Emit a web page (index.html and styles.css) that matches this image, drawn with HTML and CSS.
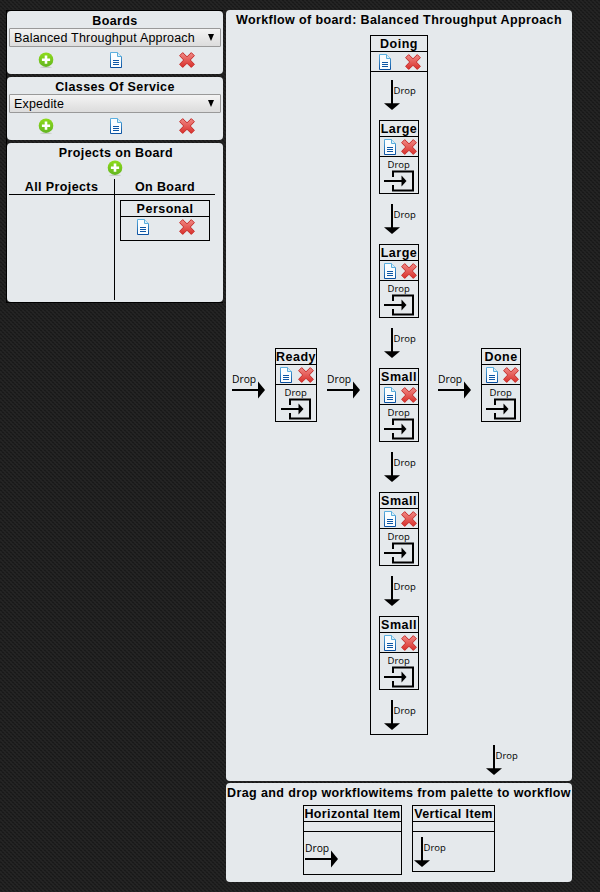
FILE: index.html
```
<!DOCTYPE html>
<html lang="en">
<head>
<meta charset="utf-8">
<title>Workflow</title>
<link rel="stylesheet" href="styles.css">
</head>
<body>
<svg class="defs" width="0" height="0">
  <defs>
    <linearGradient id="green" x1="0" y1="0" x2="0" y2="1"><stop offset="0" stop-color="#8fdc1c"/><stop offset="1" stop-color="#62b51f"/></linearGradient>
    <linearGradient id="blue" x1="0" y1="0" x2="0" y2="1"><stop offset="0" stop-color="#5cb0e0"/><stop offset="1" stop-color="#0a50a0"/></linearGradient>
    <linearGradient id="red" x1="0" y1="0" x2="0" y2="1"><stop offset="0" stop-color="#f08a86"/><stop offset="1" stop-color="#d92f2a"/></linearGradient>
    <symbol id="add" viewBox="0 0 16 16">
      <ellipse cx="8" cy="15.2" rx="6" ry=".8" fill="#c5cbc5"/>
      <circle cx="8" cy="7.7" r="7.3" fill="url(#green)"/>
      <path d="M8 3.6v8.2M3.9 7.7h8.2" stroke="#fff" stroke-width="2.6"/>
    </symbol>
    <symbol id="doc" viewBox="0 0 16 16">
      <path d="M2.5.5h7l4 4v11h-11z" fill="#fafdff" stroke="url(#blue)"/>
      <path d="M9.5.5v4h4" fill="#d9effa" stroke="#5aaedc"/>
      <path d="M5 8.500h6M5 10.500h6M5 12.500h6" stroke="#0d56a5" stroke-width="1.1"/>
    </symbol>
    <symbol id="del" viewBox="0 0 16 16">
      <path d="M3.7.6 8 4.8 12.3.6l3.1 3.1L11.3 8l4.1 4.3-3.1 3.1L8 11.3l-4.3 4.1-3.1-3.1L4.7 8 .6 3.7z" fill="url(#red)" stroke="#c62d2b" stroke-linejoin="round"/>
    </symbol>
    <symbol id="right" viewBox="0 0 34 30">
      <text x="0" y="12" class="drop">Drop</text>
      <path d="M0 19h28" stroke="#000" stroke-width="2"/>
      <path d="M26 10.500v17l7-8.500z"/>
    </symbol>
    <symbol id="down" viewBox="0 0 34 30">
      <text x="9.5" y="14" class="drop small">Drop</text>
      <path d="M8 0v25" stroke="#000" stroke-width="2"/>
      <path d="M0 23.3h16l-8 6.7z"/>
    </symbol>
    <symbol id="into" viewBox="0 0 34 36">
      <text x="5.500" y="11" class="drop small">Drop</text>
      <path d="M11 20v-5.500h20v19H11V28" fill="none" stroke="#000" stroke-width="2"/>
      <path d="M2 24h18" stroke="#000" stroke-width="2"/>
      <path d="M19.500 18.500v11l5-5.500z"/>
    </symbol>
  </defs>
</svg>
<div class="page">
  <aside class="side">
    <section class="panel">
      <h2>Boards</h2>
      <div class="select"><span>Balanced Throughput Approach</span><i></i></div>
      <div class="tools"><svg><use href="#add"/></svg><svg><use href="#doc"/></svg><svg><use href="#del"/></svg></div>
    </section>
    <section class="panel">
      <h2>Classes Of Service</h2>
      <div class="select"><span>Expedite</span><i></i></div>
      <div class="tools"><svg><use href="#add"/></svg><svg><use href="#doc"/></svg><svg><use href="#del"/></svg></div>
    </section>
    <section class="panel projects">
      <h2>Projects on Board</h2>
      <svg class="add"><use href="#add"/></svg>
      <div class="columns">
        <div class="col all"><h3>All Projects</h3></div>
        <div class="col"><h3>On Board</h3>
          <div class="project"><h4>Personal</h4><div class="tools"><svg><use href="#doc"/></svg><svg><use href="#del"/></svg></div></div>
        </div>
      </div>
    </section>
  </aside>
  <main class="main">
    <section class="panel workflow">
      <h2>Workflow of board: Balanced Throughput Approach</h2>
      <div class="flow">
        <svg class="arrow"><use href="#right"/></svg>
        <div class="item ready"><h4>Ready</h4><div class="acts"><svg><use href="#doc"/></svg><svg><use href="#del"/></svg></div><svg class="into"><use href="#into"/></svg></div>
        <svg class="arrow"><use href="#right"/></svg>
        <div class="item doing"><h4>Doing</h4><div class="acts"><svg><use href="#doc"/></svg><svg><use href="#del"/></svg></div>
          <div class="stack">
            <svg class="arrow"><use href="#down"/></svg>
            <div class="item"><h4>Large</h4><div class="acts"><svg><use href="#doc"/></svg><svg><use href="#del"/></svg></div><svg class="into"><use href="#into"/></svg></div>
            <svg class="arrow"><use href="#down"/></svg>
            <div class="item"><h4>Large</h4><div class="acts"><svg><use href="#doc"/></svg><svg><use href="#del"/></svg></div><svg class="into"><use href="#into"/></svg></div>
            <svg class="arrow"><use href="#down"/></svg>
            <div class="item"><h4>Small</h4><div class="acts"><svg><use href="#doc"/></svg><svg><use href="#del"/></svg></div><svg class="into"><use href="#into"/></svg></div>
            <svg class="arrow"><use href="#down"/></svg>
            <div class="item"><h4>Small</h4><div class="acts"><svg><use href="#doc"/></svg><svg><use href="#del"/></svg></div><svg class="into"><use href="#into"/></svg></div>
            <svg class="arrow"><use href="#down"/></svg>
            <div class="item"><h4>Small</h4><div class="acts"><svg><use href="#doc"/></svg><svg><use href="#del"/></svg></div><svg class="into"><use href="#into"/></svg></div>
            <svg class="arrow"><use href="#down"/></svg>
          </div>
        </div>
        <svg class="arrow"><use href="#right"/></svg>
        <div class="item"><h4>Done</h4><div class="acts"><svg><use href="#doc"/></svg><svg><use href="#del"/></svg></div><svg class="into"><use href="#into"/></svg></div>
      </div>
      <svg class="arrow last"><use href="#down"/></svg>
    </section>
    <section class="panel palette">
      <h2>Drag and drop workflowitems from palette to workflow</h2>
      <div class="samples">
        <div class="sample horizontal"><h4>Horizontal Item</h4><div class="blank"></div><svg class="arrow"><use href="#right"/></svg></div>
        <div class="sample vertical"><h4>Vertical Item</h4><div class="blank"></div><svg class="arrow"><use href="#down"/></svg></div>
      </div>
    </section>
  </main>
</div>
</body>
</html>
```
FILE: styles.css
```
* { box-sizing: border-box; }
body {
  margin: 0;
  height: 892px;
  overflow: hidden;
  font: 12.5px/15px "Liberation Sans", Arial, sans-serif;
  color: #000;
  background-color: #1e1e1e;
  background-image: repeating-linear-gradient(45deg, #242424 0 1.414px, transparent 1.414px 2.828px), repeating-linear-gradient(-45deg, #191919 0 1.414px, transparent 1.414px 2.828px);
  background-size: 4px 4px;
}
.defs { position: absolute; }
svg { display: block; flex: none; width: 16px; height: 16px; }
h2, h3, h4 { margin: 0; font-size: 12.5px; line-height: 17px; font-weight: bold; letter-spacing: .39px; text-align: center; white-space: nowrap; }
h2 { height: 15px; }
h4 { letter-spacing: .5px; }
.page { display: flex; align-items: flex-start; gap: 3px; padding: 10px 0 0 6px; }
.side { width: 217px; padding: 1px 0 1px 1px; display: flex; flex-direction: column; gap: 3px; background: linear-gradient(#000, #000) 0 0 / 1px 100% no-repeat, linear-gradient(#000, #000) 0 0 / 100% 1px no-repeat, linear-gradient(#000, #000) 0 100% / 100% 1px no-repeat; }
.panel { background: #e5e9ec; border-radius: 4px; }
.side .panel { height: 63px; padding: 2px 2px 0; }
.select { display: flex; align-items: center; justify-content: space-between; height: 19px; padding: 0 6px 0 4px; border: 1px solid #999; border-radius: 1px; background: linear-gradient(#f4f4f4, #dcdcdc); letter-spacing: .19px; white-space: nowrap; }
.select span { padding-top: 2px; }
.select i { flex: none; border: 3.5px solid transparent; border-top: 7px solid #000; border-bottom: 0; }
.tools { display: flex; justify-content: space-between; padding: 5px 26px 0 29px; }
.panel > .tools svg:nth-child(2) { margin-right: 1px; }
.side .projects { height: 159px; }
.projects h2 { padding-left: 2px; }
.add { margin: 0 auto; }
.columns { display: flex; width: 206px; height: 121px; margin-top: 3px; }
.col { width: 100px; }
.col h3 { height: 16px; border-bottom: 1px solid #000; }
.all { width: 106px; border-right: 1px solid #000; flex: none; }
.project { width: 90px; height: 41px; margin: 5px 0 0 5px; border: 1px solid #000; }
.project h4 { height: 16px; border-bottom: 1px solid #000; }
.project .tools { padding: 2px 14px 0; }
.main { width: 346px; display: flex; flex-direction: column; gap: 2px; }
.workflow { height: 771px; padding-top: 2px; }
.flow { display: flex; align-items: center; gap: 10px; margin-top: 8px; padding-left: 6px; }
.arrow { width: 34px; height: 30px; }
.flow > .arrow { width: 34px; height: 30px; margin: 2px -1px 0 0; }
.item { width: 40px; height: 74px; border: 1px solid #000; flex: none; }
.item h4 { height: 16px; border-bottom: 1px solid #000; }
.acts { display: flex; justify-content: space-around; height: 20px; padding-top: 2px; border-bottom: 1px solid #000; }
.into { width: 34px; height: 36px; margin: 0 auto; }
.ready { width: 42px; }
.doing { width: 58px; height: 700px; }
.stack { display: flex; flex-direction: column; align-items: center; gap: 10px; padding-top: 8px; }
.stack > .arrow { margin-left: 3px; }
.last { margin: 10px 0 0 260px; }
.palette { height: 99px; padding-top: 2px; }
.samples { display: flex; align-items: flex-start; justify-content: center; gap: 10px; margin-top: 5px; }
.sample { border: 1px solid #000; }
.sample h4 { height: 16px; border-bottom: 1px solid #000; letter-spacing: .39px; }
.horizontal { width: 99px; height: 70px; }
.vertical { width: 83px; height: 67px; }
.blank { height: 10px; border-bottom: 1px solid #000; }
.sample .arrow { margin: 5px 0 0 1px; }
.horizontal .arrow { margin-top: 8px; }
.drop { font: 10.3px "Open Sans", sans-serif; fill: #000; }
.small { font-size: 9.500px; }
```
